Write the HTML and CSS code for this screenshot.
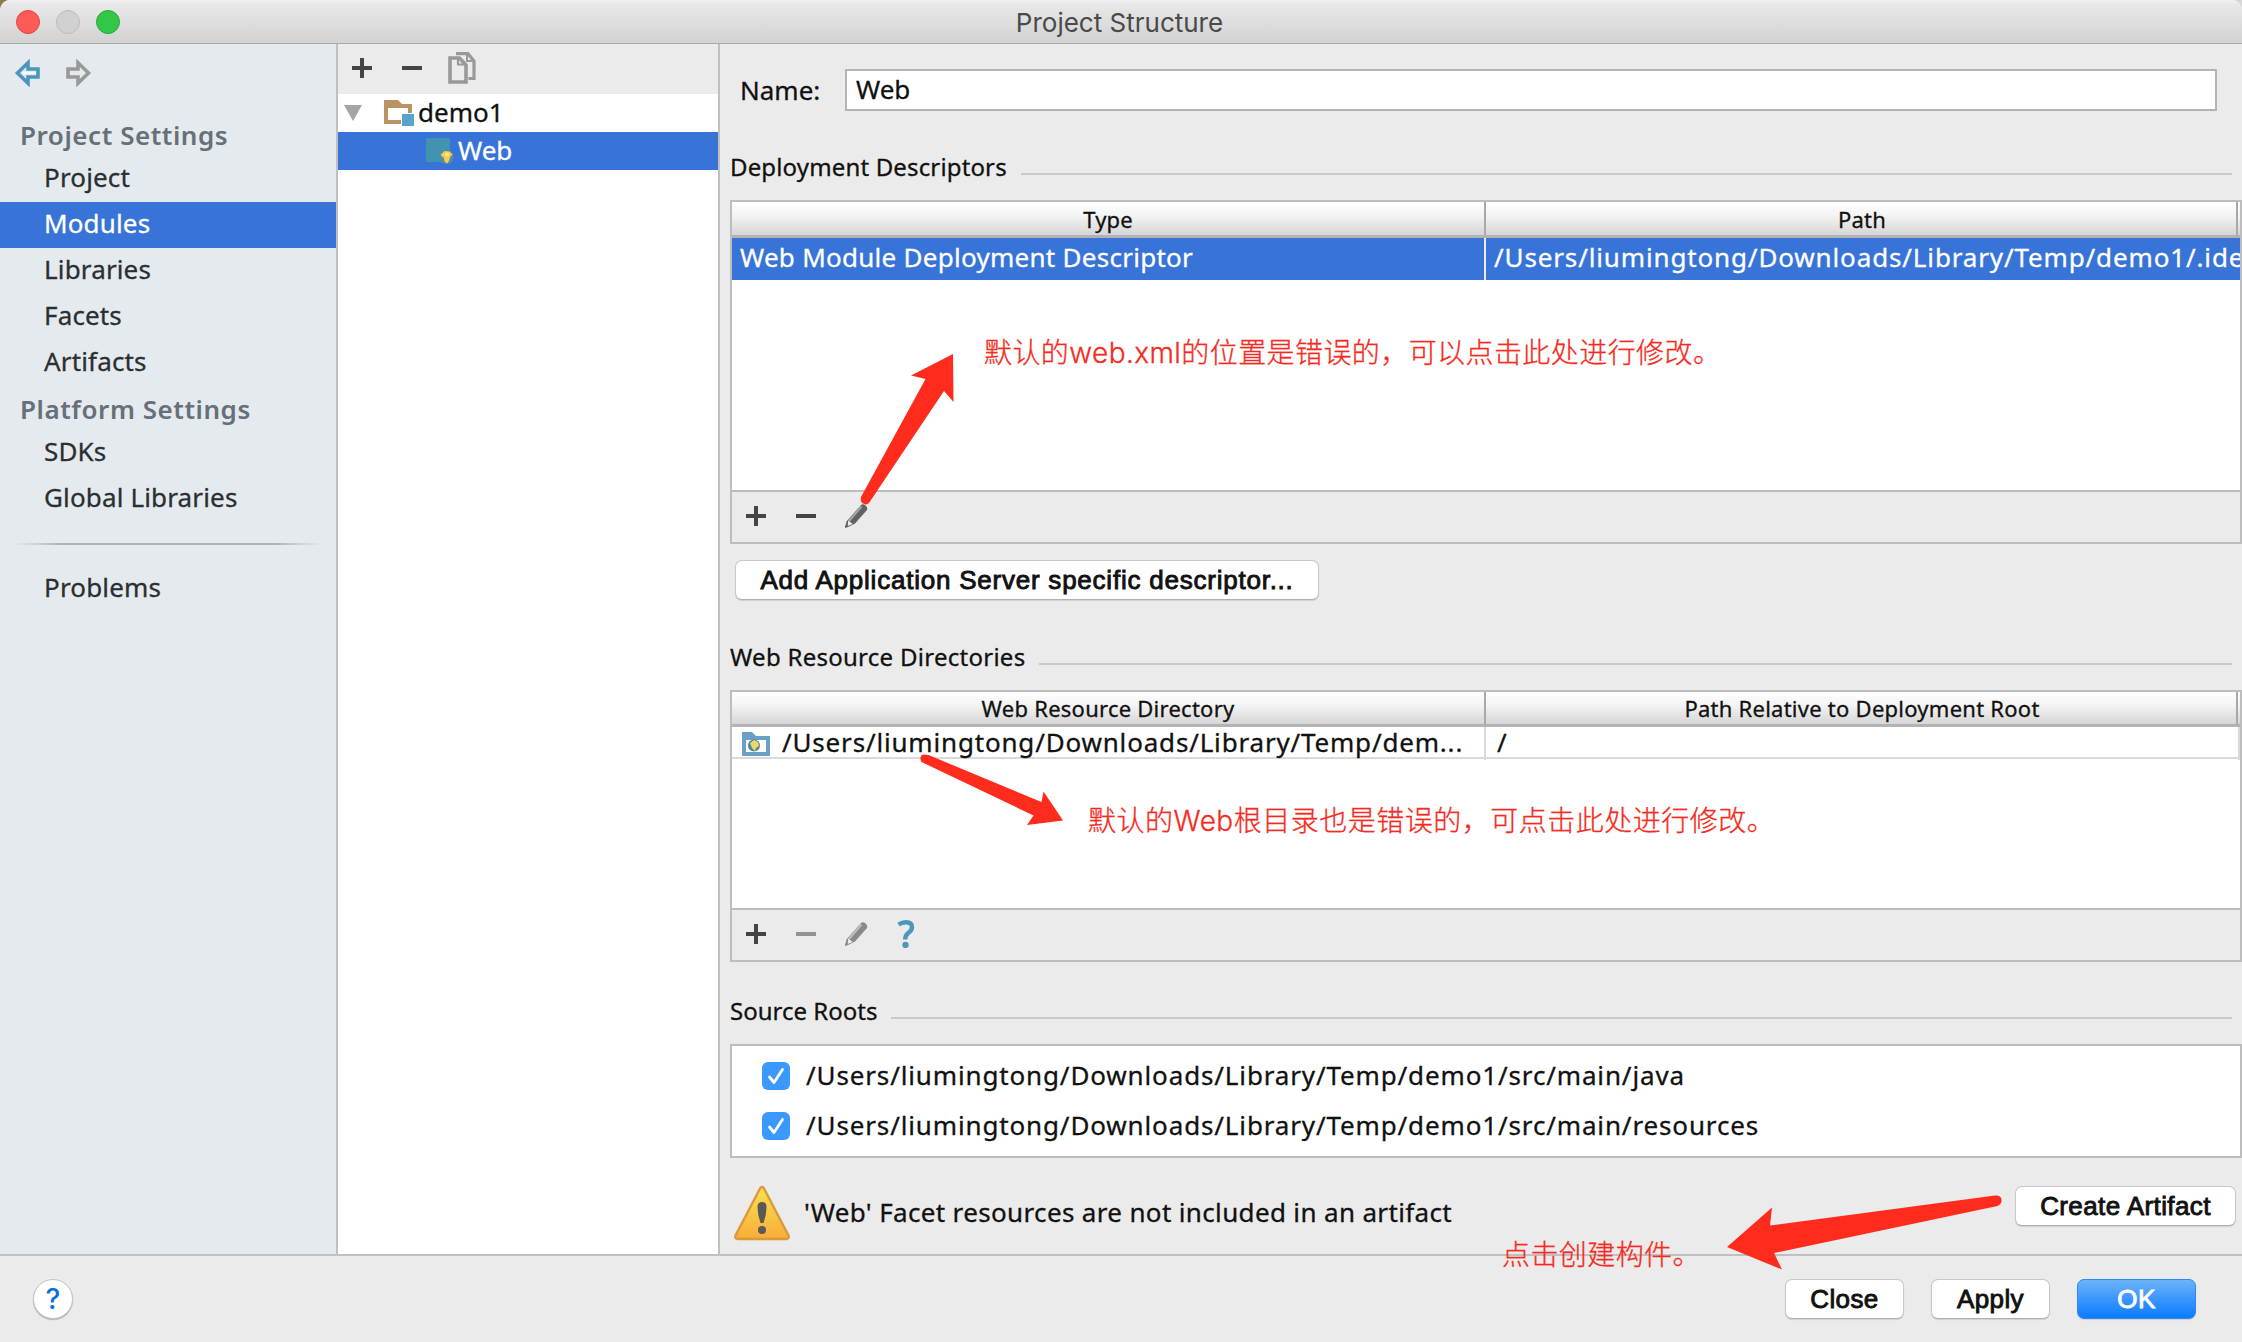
FILE: index.html
```html
<!DOCTYPE html>
<html lang="zh-CN">
<head>
  <meta charset="UTF-8">
  <meta name="viewport" content="width=device-width, initial-scale=1.0">
  <title>Project Structure</title>
  <link rel="stylesheet" href="styles.css">
</head>
<body>
  <!-- shared icons -->
  <svg class="sprite">
    <symbol id="plus" viewBox="0 0 20 20"><path d="M0 8h8V0h4v8h8v4h-8v8H8v-8H0z"/></symbol>
    <symbol id="minus" viewBox="0 0 20 20"><path d="M0 8h20v4H0z"/></symbol>
    <symbol id="pencil" viewBox="0 0 24 24">
      <path d="M17 1q2-1.500 4.500 .5T23 6L11 19.500 4 23l-3 1 1.500-6.500z" fill="currentColor"/>
      <path d="M5 17l12.500-14.500" stroke="#fff" stroke-opacity=".45" stroke-width="2"/>
      <path d="M4.200 16.500l4.500 3.500-5 2z" fill="#ededed"/>
      <path d="M1 24l1-4 2 2z" fill="currentColor"/>
    </symbol>
  </svg>

  <div class="window">
    <div class="titlebar">
      <span class="light red"></span>
      <span class="light"></span>
      <span class="light green"></span>
      <span class="title">Project Structure</span>
    </div>

    <div class="main">
      <div class="sidebar">
        <div class="nav-arrows">
          <svg width="26" height="28" viewBox="0 0 26 28">
            <path d="M3.500 14L14 3.800v6.200h10v8H14v6.200z" fill="none" stroke="#4b96bd" stroke-width="3.600"/>
            <path d="M9 14h13" stroke="#f4fafc" stroke-width="2"/>
          </svg>
          <svg width="26" height="28" viewBox="0 0 26 28">
            <path d="M22.500 14L12 3.800v6.200H2v8h10v6.200z" fill="none" stroke="#999" stroke-width="3.600"/>
          </svg>
        </div>
        <div class="nav-title">Project Settings</div>
        <div class="nav-item">Project</div>
        <div class="nav-item active">Modules</div>
        <div class="nav-item">Libraries</div>
        <div class="nav-item">Facets</div>
        <div class="nav-item">Artifacts</div>
        <div class="nav-title platform">Platform Settings</div>
        <div class="nav-item">SDKs</div>
        <div class="nav-item">Global Libraries</div>
        <div class="nav-line"></div>
        <div class="nav-item">Problems</div>
      </div>

      <div class="modules">
        <div class="modules-bar">
          <svg class="icon"><use href="#plus"/></svg>
          <svg class="icon"><use href="#minus"/></svg>
          <svg class="copy" width="28" height="32" viewBox="0 0 28 32" fill="none" stroke="#999" stroke-width="3.600">
            <path d="M2 6h9.500L18 13v17H2z"/>
            <path d="M10 5v7.500h8" stroke-width="2.200"/>
            <path d="M8 1.700h12L26 9v17.500h-5.500" stroke-width="3.200"/>
            <path d="M19 1v8h7" stroke-width="2"/>
          </svg>
        </div>
        <div class="tree-row">
          <span class="triangle"></span>
          <svg width="30" height="28" viewBox="0 0 30 28">
            <path d="M0 1h14l4 4h10v20H0zM4 9v12h20V9z" fill="#bd9262" fill-rule="evenodd"/>
            <path d="M17 14h14v14H17z" fill="#fff"/>
            <path d="M18 15h12v12H18z" fill="#5aa3cc"/>
          </svg>
          <span class="label">demo1</span>
        </div>
        <div class="tree-row selected">
          <svg width="28" height="28" viewBox="0 0 28 28">
            <path d="M0 1h24v24H0z" fill="#4293b0"/>
            <circle cx="20.500" cy="20" r="7.300" fill="#4b8fa8"/>
            <path d="M14.500 18l4-4 5 .5 3 3-2.500 2.500-1 4-2 2.500-2.500-2-.5-3.500z" fill="#ffc94d"/>
            <circle cx="21" cy="17.500" r="2" fill="#ffeaa0"/>
          </svg>
          <span class="label">Web</span>
        </div>
      </div>

      <div class="editor">
        <div class="name-row">
          <span>Name:</span>
          <div class="name-input">Web</div>
        </div>

        <div class="section-title"><span>Deployment Descriptors</span></div>
        <div class="table descriptors">
          <div class="table-head">
            <div class="cell">Type</div>
            <div class="cell">Path</div>
          </div>
          <div class="table-row">
            <div class="cell desc">Web Module Deployment Descriptor</div>
            <div class="cell path">/Users/liumingtong/Downloads/Library/Temp/demo1/.ide</div>
          </div>
          <div class="table-space"></div>
          <div class="table-bar">
            <svg class="icon"><use href="#plus"/></svg>
            <svg class="icon"><use href="#minus"/></svg>
            <svg class="pencil"><use href="#pencil"/></svg>
          </div>
        </div>
        <div class="btn btn-server">Add Application Server specific descriptor...</div>

        <div class="section-title"><span>Web Resource Directories</span></div>
        <div class="table resources">
          <div class="table-head">
            <div class="cell">Web Resource Directory</div>
            <div class="cell">Path Relative to Deployment Root</div>
          </div>
          <div class="table-row">
            <div class="cell path">
              <svg width="28" height="26" viewBox="0 0 28 26">
                <path d="M0 1h10l4 4h14v20H0z" fill="#6b9fc4"/>
                <path d="M4 9h20v12H4z" fill="#fff"/>
                <circle cx="12" cy="14.500" r="6" fill="#4d84a3"/>
                <path d="M8 12l4-3 4 2 1 4-3 2-1 3-3-3z" fill="#f0d56a"/>
              </svg>
              <span class="label">/Users/liumingtong/Downloads/Library/Temp/dem...</span>
            </div>
            <div class="cell path"><span class="label">/</span></div>
          </div>
          <div class="table-space"></div>
          <div class="table-bar">
            <svg class="icon"><use href="#plus"/></svg>
            <svg class="icon disabled"><use href="#minus"/></svg>
            <svg class="pencil disabled"><use href="#pencil"/></svg>
            <svg class="question" width="20" height="28" viewBox="0 0 20 28">
              <path d="M2.500 4.500Q6 2.300 10 2.300q6 0 6 5 0 3-3.500 5.500-3.300 2.200-3.300 6.700" fill="none" stroke="#4b97bd" stroke-width="4.400"/>
              <circle cx="9.500" cy="25" r="3.200" fill="#4b97bd"/>
            </svg>
          </div>
        </div>

        <div class="section-title"><span>Source Roots</span></div>
        <div class="roots">
          <div class="root path">
            <span class="checkbox"><svg width="28" height="28" viewBox="0 0 28 28"><path d="M7.500 15l4.500 5.500L20.500 7.500" fill="none" stroke="#fff" stroke-width="2.800" stroke-linecap="round" stroke-linejoin="round"/></svg></span>
            <span class="label">/Users/liumingtong/Downloads/Library/Temp/demo1/src/main/java</span>
          </div>
          <div class="root path">
            <span class="checkbox"><svg width="28" height="28" viewBox="0 0 28 28"><path d="M7.500 15l4.500 5.500L20.500 7.500" fill="none" stroke="#fff" stroke-width="2.800" stroke-linecap="round" stroke-linejoin="round"/></svg></span>
            <span class="label">/Users/liumingtong/Downloads/Library/Temp/demo1/src/main/resources</span>
          </div>
        </div>

        <div class="warning">
          <svg width="58" height="56" viewBox="0 0 58 56">
            <defs>
              <linearGradient id="warn" x1="0" y1="0" x2="0" y2="1">
                <stop offset="0" stop-color="#fbe04e"/>
                <stop offset="1" stop-color="#f8ad3a"/>
              </linearGradient>
            </defs>
            <path d="M27 3.500q2-3 4 0l24.500 47q1 3-2 3.500h-49q-3-.5-2-3.500z" fill="url(#warn)" stroke="#d99a3a" stroke-width="2.400"/>
            <path d="M29 17q4.500 0 4.500 5 0 8-3 16h-3q-3-8-3-16 0-5 4.500-5z" fill="#5b5858"/>
            <circle cx="29" cy="45" r="4" fill="#5b5858"/>
          </svg>
          <span class="label">'Web' Facet resources are not included in an artifact</span>
          <div class="btn btn-artifact">Create Artifact</div>
        </div>
      </div>
    </div>

    <div class="footer">
      <div class="help">?</div>
      <div class="btn">Close</div>
      <div class="btn">Apply</div>
      <div class="btn primary">OK</div>
    </div>

    <!-- notes drawn over the dialog -->
    <svg class="arrows" viewBox="0 0 2242 1342">
      <path d="M953 354L911 375.500 925.500 379 861 497q-1.500 6 4.500 7.500 3 0 5.500-4.500L944 391l9.500 11z"/>
      <path d="M928.500 755L1041.500 802l2-10.500L1063 820.500 1027 825l6.500-9.500L921.500 762q-3-6 2-7.500z"/>
      <path d="M1727 1247l45-39.500-2 18L1995 1195.500q6-.5 6.500 4t-4 6.500L1774 1253l8 16.500z"/>
    </svg>
    <div class="note note-descriptor">默认的web.xml的位置是错误的，可以点击此处进行修改。</div>
    <div class="note note-resource">默认的Web根目录也是错误的，可点击此处进行修改。</div>
    <div class="note note-artifact">点击创建构件。</div>
  </div>
</body>
</html>
```
FILE: styles.css
```css
*{
  box-sizing: border-box;
}

body{
  margin: 0;
  background: linear-gradient(90deg, #8d7a4c 50%, #d5d5d5 50%);
  font-family: "Noto Sans", "Noto Sans CJK SC", sans-serif;
  font-size: 26px;
  color: #111;
  white-space: nowrap;
}

svg{
  display: block;
  flex: none;
}

.sprite{
  display: none;
}

.window{
  position: relative;
  display: flex;
  flex-direction: column;
  width: 2242px;
  height: 1342px;
  background: #ebebeb;
  border-radius: 10px 10px 0 0;
  overflow: hidden;
}

/* title bar */
.titlebar{
  display: flex;
  align-items: center;
  gap: 16px;
  height: 44px;
  padding: 0 16px;
  background: linear-gradient(#f3f3f3, #e8e8e8 4px, #d2d2d2);
  border-bottom: 1px solid #a9a9a9;
}
.light{
  width: 24px;
  height: 24px;
  border-radius: 50%;
  background: #d1d1d1;
  border: 1px solid #bcbcbc;
}
.light.red{
  background: #fc5b57;
  border-color: #e2463f;
}
.light.green{
  background: #33c748;
  border-color: #27aa35;
}
.title{
  flex: 1;
  padding: 2px 123px 0 0;
  text-align: center;
  color: #4a4a4a;
  font-family: Inter, sans-serif;
}

.main{
  display: flex;
  height: 1212px;
  border-bottom: 2px solid #c0c0c0;
}

/* left navigation */
.sidebar{
  width: 338px;
  background: #e5eaee;
  border-right: 2px solid #c0c0c0;
  color: #2b2f31;
}
.nav-arrows{
  display: flex;
  gap: 26px;
  height: 70px;
  padding: 15px 0 0 14px;
}
.nav-title{
  height: 42px;
  padding-left: 20px;
  line-height: 43px;
  font-weight: 600;
  letter-spacing: 0.55px;
  color: #667079;
}
.nav-title.platform{
  height: 44px;
  line-height: 47px;
}
.nav-item{
  height: 46px;
  padding-left: 44px;
  line-height: 43px;
  letter-spacing: 0.15px;
  -webkit-text-stroke: 0.3px;
}
.nav-item.active{
  background: #3874d8;
  color: #fff;
}
.nav-line{
  height: 2px;
  margin: 21px 14px;
  background: linear-gradient(90deg, transparent, #b0b5b8 15%, #b0b5b8 85%, transparent);
}

/* module tree */
.modules{
  width: 382px;
  background: #fff;
  border-right: 2px solid #c0c0c0;
}
.modules-bar{
  display: flex;
  align-items: center;
  gap: 30px;
  height: 50px;
  padding: 0 0 2px 14px;
  background: #ebebeb;
}
.copy{
  margin-left: -4px;
}
.icon{
  width: 20px;
  height: 20px;
  fill: #444;
}
.icon.disabled{
  fill: #939393;
}
.label{
  padding-bottom: 3px;
}
.tree-row{
  display: flex;
  align-items: center;
  height: 38px;
  padding-left: 6px;
  -webkit-text-stroke: 0.3px;
}
.tree-row svg{
  margin-right: 4px;
}
.tree-row.selected{
  padding-left: 88px;
  background: #3874d8;
  color: #fff;
}
.triangle{
  margin-right: 22px;
  border: 9px solid transparent;
  border-top: 16px solid #a5a5a5;
  border-bottom: 0;
}

/* right side */
.editor{
  flex: 1;
  min-width: 0;
  padding-left: 10px;
  -webkit-text-stroke: 0.3px;
}
.name-row{
  display: flex;
  align-items: center;
  gap: 23px;
  padding: 25px 25px 0 10px;
}
.name-row span{
  width: 82px;
}
.name-input{
  flex: 1;
  height: 42px;
  padding-left: 9px;
  line-height: 37px;
  background: #fff;
  border: 2px solid #b4b4b4;
}
.section-title{
  display: flex;
  align-items: center;
  gap: 14px;
  height: 34px;
  margin-top: 38px;
  padding-right: 10px;
  font-size: 24px;
  letter-spacing: 0.15px;
}
.section-title::after{
  content: "";
  flex: 1;
  height: 2px;
  margin-top: 15px;
  background: #cacaca;
}
.table{
  display: flex;
  flex-direction: column;
  height: 344px;
  margin-top: 17px;
  border: 2px solid #bdbdbd;
  background: #fff;
}
.table-head,
.table-row{
  display: grid;
  grid-template-columns: 754px 1fr;
}
.table-head{
  height: 36px;
  padding-right: 2px;
  background: linear-gradient(#fff, #f4f4f4 40%, #d6d6d6);
  border-bottom: 3px solid #b3b3b3;
  font-size: 22px;
  line-height: 34px;
  letter-spacing: 0.15px;
  text-align: center;
}
.table-head .cell{
  border-right: 2px solid #a9a9a9;
}
.table-head .cell + .cell{
  padding-left: 2px;
}
.descriptors .table-row{
  height: 42px;
  line-height: 39px;
  background: #3874d8;
  color: #fff;
}
.descriptors .cell{
  overflow: hidden;
}
.desc{
  padding-left: 8px;
  border-right: 2px solid #e8edf5;
  letter-spacing: 0.27px;
}
.path{
  letter-spacing: 0.86px;
}
.descriptors .path{
  padding-left: 8px;
}
.resources{
  height: 272px;
}
.resources .table-head{
  height: 35px;
  line-height: 33px;
  letter-spacing: 0.25px;
}
.resources .table-row{
  height: 32px;
  line-height: 30px;
  border-bottom: 2px solid #dadada;
}
.resources .path{
  display: flex;
  align-items: center;
  gap: 12px;
  padding-left: 10px;
  border-right: 2px solid #dadada;
  letter-spacing: 0.82px;
}
.resources .path + .path{
  padding-left: 11px;
}
.table-space{
  flex: 1;
}
.table-bar{
  display: flex;
  align-items: center;
  gap: 30px;
  height: 52px;
  padding: 0 0 2px 14px;
  background: #ebebeb;
  border-top: 2px solid #bdbdbd;
}
.pencil{
  width: 24px;
  height: 24px;
  margin-left: -2px;
  color: #626262;
}
.pencil.disabled{
  color: #898989;
}
.question{
  margin-left: -2px;
}

.roots{
  height: 114px;
  margin-top: 17px;
  padding: 5px 0 0 30px;
  border: 2px solid #bdbdbd;
  background: #fff;
}
.root{
  display: flex;
  align-items: center;
  gap: 16px;
  height: 50px;
}
.checkbox{
  width: 28px;
  height: 28px;
  border-radius: 6px;
  background: #3b99fc;
}
.warning{
  display: flex;
  align-items: center;
  gap: 13px;
  height: 56px;
  margin-top: 27px;
  padding: 0 6px 0 3px;
  letter-spacing: 0.35px;
}

/* buttons */
.btn{
  width: 119px;
  height: 40px;
  border: 1px solid #c8c8c8;
  border-bottom-color: #b0b0b0;
  border-radius: 7px;
  background: #fff;
  box-shadow: 0 1px 1px rgba(0, 0, 0, 0.12);
  font-family: "Liberation Sans", sans-serif;
  line-height: 39px;
  letter-spacing: 0.4px;
  text-align: center;
  -webkit-text-stroke: 0.9px;
}
.btn-server{
  width: 584px;
  margin: 16px 0 0 5px;
  letter-spacing: 0.77px;
}
.btn-server + .section-title{
  margin-top: 39px;
  letter-spacing: 0.27px;
}
.btn-server + .section-title + .table{
  margin-top: 17px;
}
.resources + .section-title{
  margin-top: 31px;
  letter-spacing: 0;
}
.btn-artifact{
  width: 221px;
  margin: -14px 0 0 auto;
}
.btn.primary{
  border-color: #2f86f0;
  background: linear-gradient(#6cb3fa, #0a7bff);
  color: #fff;
}
.footer{
  display: flex;
  gap: 27px;
  padding: 23px 46px 0 33px;
}
.help{
  width: 40px;
  height: 40px;
  margin-right: auto;
  border: 1px solid #c4c4c4;
  border-radius: 50%;
  background: #fff;
  box-shadow: 0 1px 1px rgba(0, 0, 0, 0.25);
  color: #0a6fe0;
  font: 500 28px/38px Inter, sans-serif;
  text-align: center;
}

/* notes */
.arrows{
  position: absolute;
  top: 0;
  left: 0;
  width: 2242px;
  height: 1342px;
  fill: #ff2b1c;
}
.note{
  position: absolute;
  font-family: Inter, "Noto Sans CJK SC", sans-serif;
  font-size: 28px;
  font-weight: 300;
  line-height: 40px;
  letter-spacing: 0.42px;
  color: #f52a20;
  -webkit-text-stroke: 0.3px;
}
.note-descriptor{
  top: 333px;
  left: 984px;
}
.note-resource{
  top: 801px;
  left: 1088px;
  letter-spacing: 0.5px;
}
.note-artifact{
  top: 1235px;
  left: 1502px;
}
```
